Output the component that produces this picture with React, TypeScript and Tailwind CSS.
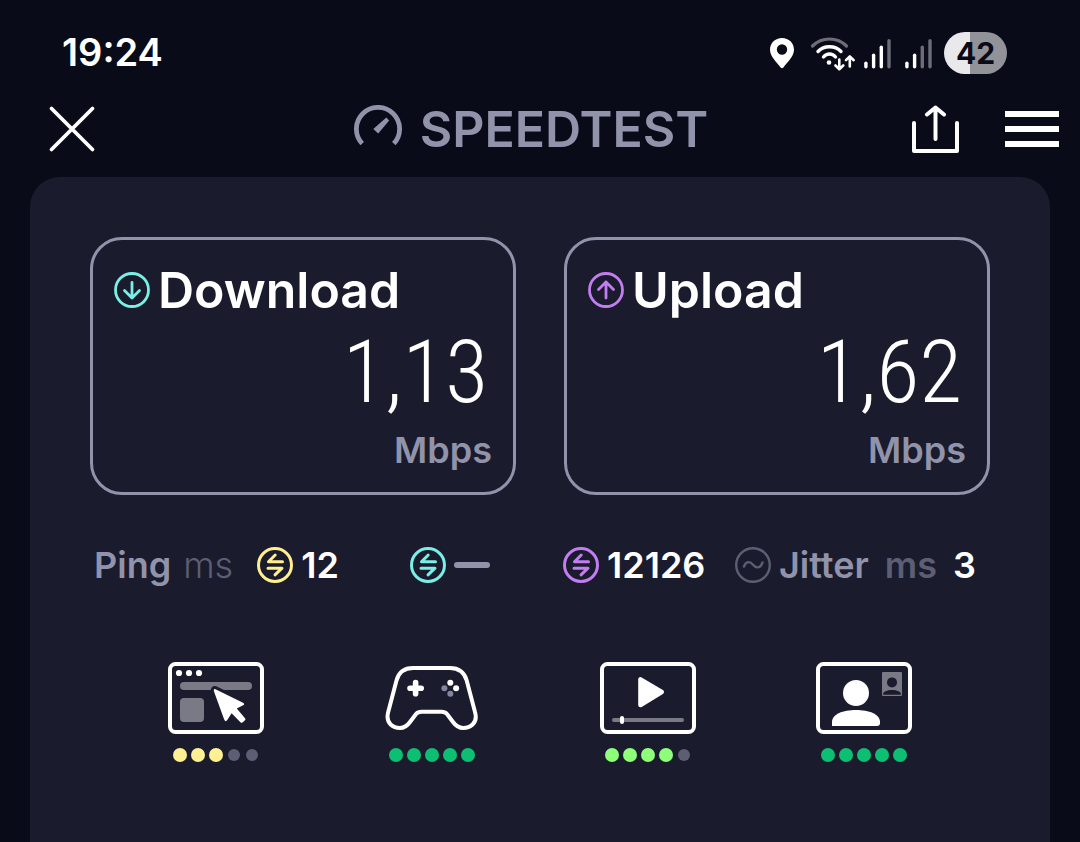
import type { ReactNode } from "react";
import clsx from "clsx";

function PinIcon() {
  return (
    <svg viewBox="0 0 24 32" aria-hidden="true" className="h-8 w-6">
      <path
        fillRule="evenodd"
        fill="white"
        d="M12 1C5.2 1 0 6 0 12.6 0 20 7 25.500 10.600 30.500Q12 32 13.400 30.500C17 25.500 24 20 24 12.600 24 6 18.800 1 12 1ZM12 7.300a5.200 5.200 0 1 1 0 10.400a5.200 5.200 0 1 1 0-10.400Z"
      />
    </svg>
  );
}

function WifiIcon() {
  return (
    <svg viewBox="0 0 46 36" aria-hidden="true" className="h-9 w-[46px]" fill="none" stroke="white" strokeLinecap="round">
      <path d="M2.500 11Q9.500 4 19.500 4T36.500 11" stroke="#6c6d78" strokeWidth="3.200" />
      <path d="M8 16.500Q12.500 11.800 19.500 11.800T31 16.500" strokeWidth="3.400" />
      <path d="M13.500 22Q16 19 19.500 19T25.500 22" strokeWidth="3.400" />
      <circle cx="19" cy="27.500" r="2.300" fill="white" stroke="none" />
      <path d="M29.300 24.500V34M25.500 30.500L29.300 34.200L33.200 30.500" strokeWidth="2.600" strokeLinejoin="round" />
      <path d="M39.800 31.500V21.500M36 25.200L39.800 21.400L43.700 25.200" strokeWidth="2.600" strokeLinejoin="round" />
    </svg>
  );
}

function SignalIcon({ level }: { level: number }) {
  const tops = [26.5, 18.5, 10.5, 4];
  return (
    <svg viewBox="0 0 27 36" aria-hidden="true" className="h-9 w-[27px]">
      {tops.map((y, i) => (
        <rect
          key={y}
          x={0.2 + i * 7.7}
          y={y}
          width="3.400"
          height={33.4 - y}
          rx="1.700"
          fill={i < level ? "white" : "#6c6d78"}
        />
      ))}
    </svg>
  );
}

function GaugeIcon() {
  return (
    <svg viewBox="0 0 48 48" aria-hidden="true" className="size-12">
      <path d="M8.200 38.700A21.600 21.600 0 1 1 39.800 38.700" fill="none" stroke="#9193ab" strokeWidth="4.800" />
      <path d="M32.300 12.600L35.200 15.400L24.200 28.600L19.300 24Z" fill="#9193ab" />
    </svg>
  );
}

function ArrowCircle({ dir }: { dir: "down" | "up" }) {
  return (
    <svg
      viewBox="0 0 36 36"
      aria-hidden="true"
      className={clsx("size-9 shrink-0", dir === "down" ? "text-[#79efe6]" : "text-[#c37df0]")}
      fill="none"
      stroke="currentColor"
      strokeWidth="2.800"
      strokeLinecap="round"
      strokeLinejoin="round"
    >
      <circle cx="18" cy="18" r="16.500" />
      {dir === "down" ? <path d="M18 10.500V26M10.500 18.500L18 26L25.500 18.500" /> : <path d="M18 26V10M10.500 17.500L18 10L25.500 17.500" />}
    </svg>
  );
}

function PingCircle({ className }: { className: string }) {
  return (
    <svg
      viewBox="0 0 36 36"
      aria-hidden="true"
      className={clsx("size-9 shrink-0", className)}
      fill="none"
      stroke="currentColor"
      strokeWidth="3"
      strokeLinecap="round"
      strokeLinejoin="round"
    >
      <circle cx="18" cy="18" r="16.500" />
      <path d="M25.500 14.800H11.500L18.200 8M11 21.200H25L18 27.800" />
    </svg>
  );
}

function JitterCircle() {
  return (
    <svg viewBox="0 0 36 36" aria-hidden="true" className="size-9 shrink-0" fill="none" stroke="#5d5e73" strokeLinecap="round">
      <circle cx="18" cy="18" r="16.800" strokeWidth="2.400" />
      <path d="M9 19.500C11 14 15 14 18 17.800S25.500 21.500 27.500 15.500" strokeWidth="2.400" />
    </svg>
  );
}

function Screen({ children }: { children: ReactNode }) {
  return (
    <svg viewBox="0 0 96 72" aria-hidden="true" className="h-[72px] w-24">
      <rect x="2" y="2" width="92" height="68" rx="5.500" fill="none" stroke="white" strokeWidth="4" />
      {children}
    </svg>
  );
}

function WebIcon() {
  return (
    <Screen>
      <g fill="white">
        <circle cx="11" cy="11" r="3.100" />
        <circle cx="21" cy="11" r="3.100" />
        <circle cx="31" cy="11" r="3.100" />
      </g>
      <rect x="12" y="20" width="72" height="8" rx="4" fill="#7a7a86" />
      <rect x="12" y="36" width="24" height="24" rx="4" fill="#7a7a86" />
      <path
        d="M47.500 27.200L75 40.700Q77.500 42.300 74.600 43.600L68.800 46.600L77.200 56.500Q77.800 57.500 77 58.200L74.500 60.500Q73.500 61.200 72.700 60.400L63.600 51.200L59.300 58Q57.500 60.500 56.200 57.500L45.800 29Q45.500 26.500 47.500 27.200Z"
        fill="white"
        stroke="#1a1b2d"
        strokeWidth="6"
        paintOrder="stroke"
      />
    </Screen>
  );
}

function GameIcon() {
  return (
    <svg viewBox="0 0 96 72" aria-hidden="true" className="h-[72px] w-24">
      <path
        d="M29 6H66C75 6 80.500 11 82.700 18.500L91 50C94.500 62 85 66 79.300 66C74 66 71.500 63.500 69 60L63 52Q61 49.800 57.500 49.800H37.500Q34 49.800 32 52L26 60C23.500 63.500 21 66 16 66C10 66 1 62 4.200 50L12.500 18.500C14.500 11 20 6 29 6Z"
        fill="none"
        stroke="white"
        strokeWidth="4"
      />
      <path d="M31.600 20.600V31.700M26 26.200H37.200" stroke="white" strokeWidth="5.600" strokeLinecap="round" />
      <circle cx="60.400" cy="26.300" r="3" fill="#8385a0" />
      <circle cx="66.300" cy="31.700" r="3" fill="#8385a0" />
      <circle cx="66.300" cy="20.800" r="3" fill="white" />
      <circle cx="72.100" cy="26.300" r="3" fill="white" />
    </svg>
  );
}

function VideoIcon() {
  return (
    <Screen>
      <path d="M40.500 17.500V43L61.700 30Z" fill="white" stroke="white" strokeWidth="4.600" strokeLinejoin="round" />
      <rect x="12" y="56" width="72" height="4" rx="2" fill="#7a7a86" />
      <rect x="20" y="54" width="4" height="8" rx="2" fill="white" />
    </Screen>
  );
}

function CallIcon() {
  return (
    <Screen>
      <circle cx="40" cy="31" r="13" fill="white" />
      <path d="M16 64V60C16 52 27 48 40 48S64 52 64 60V61Q64 64 61 64Z" fill="white" />
      <rect x="66" y="10" width="20" height="24" rx="1" fill="#7a7a86" />
      <circle cx="76" cy="20.400" r="5" fill="#1a1b2d" />
      <path d="M67 32.700C67 29.500 71 28 76 28S85 29.500 85 32.700Z" fill="#1a1b2d" />
    </Screen>
  );
}

const results = [
  { dir: "down" as const, label: "Download", value: "1,13" },
  { dir: "up" as const, label: "Upload", value: "1,62" },
];

const ratings = [
  { name: "Web browsing", icon: <WebIcon />, score: 3, color: "bg-[#fff093]" },
  { name: "Gaming", icon: <GameIcon />, score: 5, color: "bg-[#0cbf72]" },
  { name: "Video streaming", icon: <VideoIcon />, score: 4, color: "bg-[#8dff78]" },
  { name: "Video calls", icon: <CallIcon />, score: 5, color: "bg-[#0cbf72]" },
];

function Dots({ score, color }: { score: number; color: string }) {
  return (
    <div className="flex gap-1">
      {[0, 1, 2, 3, 4].map((i) => (
        <span key={i} className="grid size-3.5 place-items-center">
          <span className={clsx("rounded-full", i < score ? ["size-3.5", color] : "size-3 bg-[#5d5e73]")} />
        </span>
      ))}
    </div>
  );
}

export default function App() {
  return (
    <div className="flex min-h-screen flex-col bg-[#090b19] font-['Inter',sans-serif] text-white">
      <div className="flex h-[105px] items-center justify-between pr-[73px] pl-[62px]">
        <time className="text-[38px] font-semibold">19:24</time>
        <div className="flex items-center">
          <PinIcon />
          <div className="ml-4 flex items-center gap-2">
            <WifiIcon />
            <div className="flex gap-3.5">
              <SignalIcon level={3} />
              <SignalIcon level={2} />
            </div>
          </div>
          <div className="ml-3 grid h-[42px] w-[63px] place-items-center rounded-full bg-linear-to-r from-[#e9e9ec] from-42% to-[#929299] to-42% text-[30px] leading-none font-bold text-[#090b19]">
            42
          </div>
        </div>
      </div>

      <header className="mb-6 grid h-12 grid-cols-[1fr_auto_1fr] items-center pr-[18px]">
        <button type="button" aria-label="Close" className="ml-12 size-12">
          <svg viewBox="0 0 48 48" aria-hidden="true" className="size-12">
            <path d="M3.500 3.500L44.500 44.500M44.500 3.500L3.500 44.500" stroke="white" strokeWidth="3.800" strokeLinecap="round" />
          </svg>
        </button>
        <h1 className="flex items-center gap-[18px] text-[50px] leading-[48px] font-semibold text-[#9193ab]">
          <GaugeIcon />
          SPEEDTEST
        </h1>
        <div className="mr-[3px] flex items-center gap-[46px] justify-self-end">
          <button type="button" aria-label="Share" className="h-12 w-[47px]">
            <svg viewBox="0 0 47 48" aria-hidden="true" className="h-12 w-[47px]" fill="none" stroke="white" strokeWidth="4" strokeLinecap="round" strokeLinejoin="round">
              <path d="M2 18V46H45V18M23.500 34V2.500M15 9.500L23.500 2.500L32 9.500" />
            </svg>
          </button>
          <button type="button" aria-label="Menu" className="flex w-[54px] flex-col gap-[9px]">
            <span className="h-1.5 bg-white" />
            <span className="h-1.5 bg-white" />
            <span className="h-1.5 bg-white" />
          </button>
        </div>
      </header>

      <main className="mx-[30px] flex-1 rounded-t-[30px] bg-[#1a1b2d] px-[60px] pt-[60px]">
        <div className="grid grid-cols-2 gap-12">
          {results.map((r) => (
            <section key={r.label} className="rounded-[32px] border-3 border-[#9193ab] px-[21px] py-5">
              <h2 className="flex items-center gap-2 text-[50px] leading-[60px] font-semibold">
                <ArrowCircle dir={r.dir} />
                {r.label}
              </h2>
              <p className="mb-1 pr-1 text-right font-['Roboto_Condensed','Roboto',sans-serif] text-[88px] leading-[104px] font-light">
                {r.value}
              </p>
              <p className="text-right text-[36px] leading-[44px] font-semibold text-[#9193ab]">Mbps</p>
            </section>
          ))}
        </div>

        <div className="mt-12 grid grid-cols-[316fr_153fr_172fr_241fr] pr-3.5 pl-1 text-[36px] leading-[44px] font-semibold whitespace-nowrap">
          <div className="flex items-center gap-2">
            <span className="text-[#9193ab]">Ping</span>
            <span className="mr-4 ml-1 font-light text-[#5d5e73]">ms</span>
            <PingCircle className="text-[#ffef8d]" />
            <span>12</span>
          </div>
          <div className="flex items-center gap-2">
            <PingCircle className="text-[#79efe6]" />
            <span className="h-1.5 w-9 rounded-full bg-[#9193ab]" />
          </div>
          <div className="flex items-center gap-2">
            <PingCircle className="text-[#c37df0]" />
            <span>12126</span>
          </div>
          <div className="flex items-center gap-2">
            <JitterCircle />
            <span className="text-[#9193ab]">Jitter</span>
            <span className="mr-2 ml-2 text-[#5d5e73]">ms</span>
            <span>3</span>
          </div>
        </div>

        <ul className="mt-[75px] grid grid-cols-4 px-[18px]">
          {ratings.map((r) => (
            <li key={r.name} aria-label={r.name} className="flex flex-col items-center gap-3.5">
              {r.icon}
              <Dots score={r.score} color={r.color} />
            </li>
          ))}
        </ul>
      </main>
    </div>
  );
}
